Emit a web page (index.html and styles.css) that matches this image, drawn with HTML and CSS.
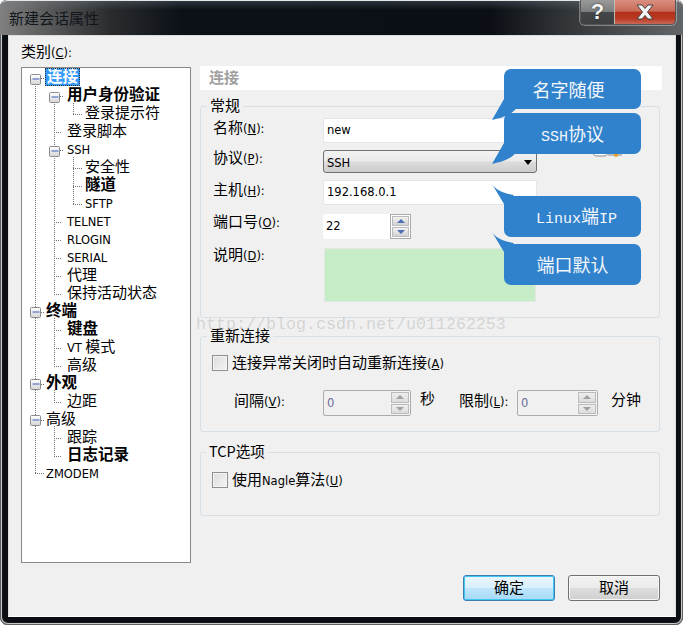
FILE: index.html
```html
<!DOCTYPE html>
<html lang="zh-CN">
<head>
<meta charset="utf-8">
<title>新建会话属性</title>
<link rel="stylesheet" href="styles.css">
</head>
<body>
<div class="window">
  <header class="titlebar">
    <span class="title">新建会话属性</span>
    <div class="caption">
      <span class="cap-help">?</span>
      <span class="cap-close">
        <svg width="22" height="16" viewBox="0 0 22 16"><path d="M3 1h5l3 3.500L14 1h5l-5.500 7 5.500 7h-5l-3-3.500L8 15H3l5.500-7z" fill="#f4f4f4" stroke="#444" stroke-width="1"/></svg>
      </span>
    </div>
  </header>

  <main class="client">
    <div class="cat-label">类别<span class="m">(<u>C</u>):</span></div>
    <div class="spacer"></div>

    <nav class="tree">
      <svg class="tree-lines" width="168" height="494" viewBox="22 68 168 494">
        <defs>
          <linearGradient id="bx" x1="0" y1="0" x2="0" y2="1"><stop offset="0" stop-color="#fff"/><stop offset="1" stop-color="#d4d4d4"/></linearGradient>
          <g id="box">
            <rect x="-5" y="-5" width="10" height="10" rx="1" fill="url(#bx)" stroke="#8c8c8c"/>
            <path d="M-3-.5h7" stroke="#3a5fc0" stroke-width="1"/>
          </g>
        </defs>
        <path class="dots" d="M35.500 84V473.500M54.500 102V294.500M54.500 318V366.500M54.500 390V402.500M54.500 426V456.500M73.500 103V114.500M73.500 157V204.500
        M41 78.500h4M60 96.500h4M54 132.500h8M60 150.500h4M73 114.500h10M73 168.500h10M73 186.500h10M73 204.500h10
        M54 222.500h8M54 240.500h8M54 258.500h8M54 276.500h8M54 294.500h8M41 312.500h4M54 330.500h8M54 348.500h8M54 366.500h8M41 384.500h4M54 402.500h8M41 420.500h4M54 438.500h8M54 456.500h8M35 473.500h9"/>
        <use href="#box" x="35.500" y="79.500"/>
        <use href="#box" x="54.500" y="97.500"/>
        <use href="#box" x="54.500" y="151.500"/>
        <use href="#box" x="35.500" y="312.500"/>
        <use href="#box" x="35.500" y="384.500"/>
        <use href="#box" x="35.500" y="420.500"/>
      </svg>
      <ul class="rows">
        <li class="l0 b"><span class="sel">连接</span></li>
        <li class="l1 b">用户身份验证</li>
        <li class="l2">登录提示符</li>
        <li class="l1">登录脚本</li>
        <li class="l1 la">SSH</li>
        <li class="l2">安全性</li>
        <li class="l2 b">隧道</li>
        <li class="l2 la">SFTP</li>
        <li class="l1 la">TELNET</li>
        <li class="l1 la">RLOGIN</li>
        <li class="l1 la">SERIAL</li>
        <li class="l1">代理</li>
        <li class="l1">保持活动状态</li>
        <li class="l0 b">终端</li>
        <li class="l1 b">键盘</li>
        <li class="l1"><span class="m">VT</span> 模式</li>
        <li class="l1">高级</li>
        <li class="l0 b">外观</li>
        <li class="l1">边距</li>
        <li class="l0">高级</li>
        <li class="l1">跟踪</li>
        <li class="l1 b">日志记录</li>
        <li class="l0 la">ZMODEM</li>
      </ul>
    </nav>

    <section class="panel">
      <div class="panel-head">连接</div>

      <fieldset class="group g-general">
        <legend>常规</legend>
        <div class="form">
          <label class="lbl lbl-name">名称<span class="m">(<u>N</u>):</span></label>
          <div class="field text-field">new</div>
          <label class="lbl">协议<span class="m">(<u>P</u>):</span></label>
          <div class="combo">SSH<i class="combo-arrow"></i></div>
          <label class="lbl lbl-host">主机<span class="m">(<u>H</u>):</span></label>
          <div class="field text-field">192.168.0.1</div>
          <label class="lbl lbl-port">端口号<span class="m">(<u>O</u>):</span></label>
          <div class="spin spin-port">
            <span class="spin-val">22</span>
            <span class="spin-btns"><i class="up"></i><i class="down"></i></span>
          </div>
          <label class="lbl lbl-desc">说明<span class="m">(<u>D</u>):</span></label>
          <div class="desc"></div>
        </div>
        <svg class="key" width="32" height="8" viewBox="0 0 32 8"><path d="M1 0c0 4 3 5 6 5h6c3 0 4-2 4-5M17 4h14" fill="#fff" stroke="#888"/><circle cx="25" cy="4" r="2" fill="#e8a020"/></svg>
      </fieldset>

      <fieldset class="group g-reconnect">
        <legend>重新连接</legend>
        <div class="check-row"><i class="check"></i><span>连接异常关闭时自动重新连接<span class="m">(<u>A</u>)</span></span></div>
        <div class="interval-row">
          <span class="iv-label">间隔<span class="m">(<u>V</u>):</span></span>
          <div class="spin spin-off spin-a"><span class="spin-val">0</span><span class="spin-btns"><i class="up"></i><i class="down"></i></span></div>
          <span class="unit-sec">秒</span>
          <span class="limit-label">限制<span class="m">(<u>L</u>):</span></span>
          <div class="spin spin-off spin-b"><span class="spin-val">0</span><span class="spin-btns"><i class="up"></i><i class="down"></i></span></div>
          <span class="unit-min">分钟</span>
        </div>
      </fieldset>

      <fieldset class="group g-tcp">
        <legend>TCP选项</legend>
        <div class="check-row"><i class="check"></i><span>使用<span class="m">Nagle</span>算法<span class="m">(<u>U</u>)</span></span></div>
      </fieldset>
    </section>

    <footer class="footer">
      <button class="btn btn-ok">确定</button>
      <button class="btn btn-cancel">取消</button>
    </footer>
  </main>

  <div class="watermark">http://blog.csdn.net/u011262253</div>

  <div class="bubble b1">名字随便<svg class="tail" width="30" height="30" viewBox="0 0 30 30"><path d="M14 0L2 21C10 19 18 18 26 10z"/></svg></div>
  <div class="bubble b2"><span class="bl">SSH</span>协议<svg class="tail" width="30" height="30" viewBox="0 0 30 30"><path d="M14 0L2 21C10 19 18 18 26 10z"/></svg></div>
  <div class="bubble b3"><span class="bl">Linux</span>端<span class="bl">IP</span><svg class="tail tail-up" width="30" height="30" viewBox="0 0 30 30"><path d="M2 0C6 6 12 9 24 11L14 20z"/></svg></div>
  <div class="bubble b4">端口默认<svg class="tail tail-up" width="30" height="30" viewBox="0 0 30 30"><path d="M2 0C6 6 12 9 24 11L14 20z"/></svg></div>
</div>
</body>
</html>
```

FILE: styles.css
```css
* { box-sizing: border-box; }
html, body { margin: 0; background: #fff; }
body {
  width: 683px;
  height: 625px;
  overflow: hidden;
  font-family: "Noto Sans CJK SC", "Noto Sans", sans-serif;
  font-size: 15px;
  color: #000;
}
.m, .la, .text-field, .combo, .spin-val {
  font-family: "DejaVu Sans", "Noto Sans CJK SC", sans-serif;
  font-size: 11.500px;
}
u { text-underline-offset: 1px; }

.window {
  position: relative;
  width: 683px;
  height: 625px;
  display: flex;
  flex-direction: column;
  padding: 0 7px 8px 8px;
  background: #0b0f14;
  border-radius: 7px 7px 8px 8px;
  box-shadow: inset 0 0 0 1px #5a5f63, inset 0 0 0 2px #c8c8c8, inset 0 0 0 3px #16191c;
  overflow: hidden;
}

.titlebar {
  flex: none;
  height: 35px;
  margin: 0 -7px 0 -8px;
  padding: 0 7px 0 9px;
  display: flex;
  justify-content: space-between;
  align-items: flex-start;
  border-top: 1px solid #e6e6e6;
  border-radius: 7px 7px 0 0;
  background:
    linear-gradient(180deg, rgba(120,135,150,.3) 0, rgba(30,40,50,0) 9px),
    linear-gradient(90deg, #808080 0, #5f6060 40px, #2a2c2e 110px, #0c1118 180px, #0b0f15 490px, #2f3336 560px, #636668 683px);
}
.title {
  margin-top: 7px;
  line-height: 20px;
  color: #11161c;
}
.caption {
  display: flex;
  height: 25px;
  margin-top: -1px;
  border: 1px solid #555;
  border-top: 0;
  border-radius: 0 0 5px 5px;
  overflow: hidden;
  box-shadow: 0 0 0 1px rgba(255,255,255,.35);
}
.cap-help {
  width: 34px;
  display: flex;
  align-items: center;
  justify-content: center;
  font: bold 22px/1 "Liberation Sans", sans-serif;
  color: #f4f4f4;
  text-shadow: 0 0 2px #222;
  background: linear-gradient(180deg, #9a9a9a 0, #7d7e7f 48%, #444749 52%, #3d4043 100%);
  border-right: 1px solid #bbb;
}
.cap-close {
  width: 60px;
  display: flex;
  align-items: center;
  justify-content: center;
  background: linear-gradient(180deg, #d98f80 0, #c96a57 46%, #b5301a 52%, #b93a22 78%, #c9695a 100%);
}

.client {
  flex: 1;
  display: grid;
  grid-template-columns: 170px 462px;
  grid-template-rows: 21px 1px 496px auto;
  column-gap: 9px;
  padding: 9px 13px 0 12px;
  background: #f0f0f0;
  border: 1px solid #dcdcdc;
  border-bottom-color: #fff;
}
.cat-label { grid-column: 1 / 3; line-height: 14px; margin-top: -1px; }
.spacer { grid-column: 1 / 3; }

.tree {
  position: relative;
  grid-column: 1;
  grid-row: 3;
  background: #fff;
  border: 1px solid #8a8a8a;
}
.tree-lines { position: absolute; left: 0; top: 0; }
.dots { fill: none; stroke: #707070; stroke-dasharray: 1 1; }
.rows { list-style: none; margin: 0; padding: 0; position: relative; }
.rows li { height: 18px; line-height: 15px; white-space: nowrap; }
.rows li.la { line-height: 20px; }
.l0 { padding-left: 24px; }
.l1 { padding-left: 45px; }
.l2 { padding-left: 63px; }
.b { font-weight: 700; font-size: 15.500px; }
.la { font-weight: 400; }
.sel {
  display: inline-block;
  height: 18px;
  padding: 0 2px;
  margin-left: -1px;
  color: #fff;
  background: #3399ff;
  outline: 1px dotted #333;
  outline-offset: -1px;
}

.panel {
  grid-column: 2;
  grid-row: 2 / 4;
  display: flex;
  flex-direction: column;
}
.panel-head {
  flex: none;
  height: 24px;
  line-height: 22px;
  padding-left: 9px;
  background: #fff;
  color: #a0a0a0;
  font-weight: 700;
}
.group {
  position: relative;
  margin: 0 2px 0 0;
  min-width: 0;
  border: 1px solid #d6e0e6;
  border-radius: 3px;
}
.group legend {
  padding: 0 3px;
  line-height: 14px;
  height: 16px;
}
.g-general { margin-top: 8px; height: 220px; padding: 4px 0 0 12px; }
.g-general legend { margin-left: -6px; }
.g-reconnect { margin-top: 10px; height: 104px; padding: 11px 0 0 11px; }
.g-reconnect legend { margin-left: -5px; }
.g-tcp { margin-top: 12px; height: 72px; padding: 12px 0 0 11px; }
.g-tcp legend { margin-left: -6px; font-size: 14.500px; }

.form {
  display: grid;
  grid-template-columns: 110px 214px;
  grid-template-rows: 25px 23px 25px 27px 54px;
  row-gap: 7px;
  align-items: start;
}
.lbl { line-height: 14px; }
.lbl-name, .lbl-host { margin-top: 2px; }
.lbl-desc { margin-top: 1px; }
.lbl-port { margin-top: 2px; }
.field {
  height: 25px;
  line-height: 23px;
  padding-left: 3px;
  background: #fff;
  border: 1px solid #e2e6ea;
  border-radius: 2px;
}
.combo {
  position: relative;
  height: 23px;
  line-height: 25px;
  padding-left: 3px;
  border: 1px solid #707070;
  border-radius: 3px;
  background: linear-gradient(180deg, #f2f2f2 0, #ebebeb 48%, #dcdcdc 52%, #cdcdcd 100%);
}
.combo-arrow {
  position: absolute;
  right: 4px;
  top: 9px;
  border-style: solid;
  border-width: 5px 4px 0;
  border-color: #000 transparent transparent;
}
.spin {
  display: flex;
  width: 88px;
  height: 26px;
  position: relative;
}
.spin-port { background: #fff; border-radius: 2px; margin-top: 2px; height: 25px; }
.spin-val { flex: 1; line-height: 25px; padding-left: 3px; }
.spin-btns {
  flex: none;
  width: 21px;
  display: flex;
  flex-direction: column;
  gap: 1px;
  padding: 1px;
  background: #fff;
  border: 1px solid #aaa;
}
.spin-btns i {
  position: relative;
  flex: 1;
  background: linear-gradient(180deg, #f2f2f2, #d2d2d2);
  border: 1px solid #bbb;
}
.spin-btns i::after {
  content: "";
  position: absolute;
  left: 4px;
  border-style: solid;
  border-color: transparent;
}
.up::after { top: 2px; border-width: 0 4px 4px; border-bottom-color: #4d6fb8 !important; }
.down::after { top: 2px; border-width: 4px 4px 0; border-top-color: #4d6fb8 !important; }
.desc {
  width: 212px;
  height: 54px;
  background: #c7edc7;
  border: 1px solid #e2e8e2;
  margin-top: 2px;
  margin-left: 1px;
}
.key { position: absolute; left: 390px; top: 37px; }

.check-row {
  display: flex;
  align-items: center;
  gap: 4px;
  height: 16px;
  line-height: 14px;
}
.check {
  flex: none;
  width: 16px;
  height: 16px;
  border: 1px solid #8e8f8f;
  outline: 1px solid #f4f4f4;
  outline-offset: -2px;
  background: linear-gradient(135deg, #dcdcdc, #f4f4f4);
}
.interval-row {
  display: flex;
  align-items: center;
  height: 26px;
  margin-top: 19px;
}
.iv-label { width: 89px; margin-left: 22px; margin-bottom: 8px; }
.spin-off { background: #f0f0f0; border: 1px solid #acacac; border-radius: 2px; }
.spin-off .spin-val { color: #6d6d9a; line-height: 24px; }
.spin-off .spin-btns { background: #f4f4f4; border: 0; width: 20px; }
.spin-off .spin-btns i { background: linear-gradient(180deg, #eee, #dcdcdc); }
.spin-off .up::after { border-bottom-color: #a0a0a0 !important; }
.spin-off .down::after { border-top-color: #a0a0a0 !important; }
.spin-a { width: 88px; }
.spin-b { width: 81px; }
.unit-sec { margin-left: 9px; margin-bottom: 12px; }
.limit-label { margin-left: 24px; width: 58px; margin-bottom: 8px; }
.unit-min { margin-left: 13px; margin-bottom: 10px; }

.footer {
  grid-column: 1 / 3;
  grid-row: 4;
  display: flex;
  justify-content: flex-end;
  gap: 13px;
  padding: 12px 2px 0 0;
}
.btn {
  width: 92px;
  height: 26px;
  padding: 0 0 3px;
  font: inherit;
  line-height: 18px;
  border-radius: 3px;
  color: #000;
}
.btn-ok {
  border: 1px solid #3c7fb1;
  box-shadow: inset 0 0 0 1px #40c8f4;
  background: linear-gradient(180deg, #eaf6fd 0, #d9f0fc 48%, #bee6fd 52%, #a7d9f5 100%);
}
.btn-cancel {
  border: 1px solid #707070;
  box-shadow: inset 0 0 0 1px #f8f8f8;
  background: linear-gradient(180deg, #f2f2f2 0, #ebebeb 48%, #dddddd 52%, #cfcfcf 100%);
}

.watermark {
  position: absolute;
  left: 196px;
  top: 315px;
  font-family: "Liberation Mono", monospace;
  font-size: 16.670px;
  line-height: 20px;
  color: rgba(90, 90, 90, .2);
  white-space: nowrap;
}

.bubble {
  position: absolute;
  left: 504px;
  width: 137px;
  height: 40px;
  line-height: 40px;
  text-align: center;
  background: #3182cc;
  border-radius: 7px;
  color: #f2f7fc;
  font-size: 18px;
}
.bl { font-family: "Liberation Mono", monospace; font-size: 15px; }
.tail { position: absolute; left: -14px; top: 30px; fill: #3182cc; }
.tail-up { top: -12px; }
.b1 { top: 69px; padding-right: 8px; }
.b2 { top: 113px; height: 41px; }
.b3 { top: 196px; height: 41px; padding-left: 8px; line-height: 39px; }
.b4 { top: 244px; height: 41px; }
```
